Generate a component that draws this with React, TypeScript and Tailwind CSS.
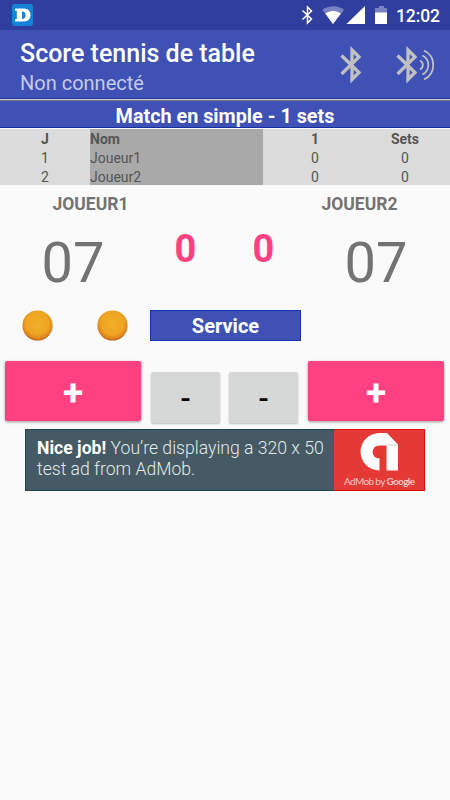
const rows = [
  { id: '1', name: 'Joueur1', set: '0', sets: '0' },
  { id: '2', name: 'Joueur2', set: '0', sets: '0' },
]

function StatusBar() {
  return (
    <div className="h-[30px] bg-[#303f9f] flex items-center text-white">
      <svg className="ml-3 w-[21px] h-[22px] shrink-0" viewBox="0 0 21 22">
        <rect width="21" height="22" rx="3" fill="#1683d8" />
        <path
          fill="#fff"
          fillRule="evenodd"
          d="M3 4.500h9c4 0 6.500 2.800 6.500 6.600S16 17.500 12 17.500H3v-2.300h1.800V6.800H3zM10 7.500v7.500c2.500 0 3.600-1.400 3.600-3.700S12.500 7.500 10 7.500z"
        />
      </svg>
      <svg className="ml-auto mr-[5px] w-[145px] h-[30px]" viewBox="300 0 145 30">
        <path
          d="M302.500 10.500l9 8.500-4 4V7l4 4-9 8.500"
          fill="none"
          stroke="#fff"
          strokeWidth="1.500"
        />
        <path d="M322.500 10C328 5 338.500 5 344 10L333 24z" fill="#7882c1" />
        <path d="M325.300 13.500C329.500 10 337 10 340.800 13.500L333 24z" fill="#fff" />
        <path d="M346.500 24L365 6v18z" fill="#fff" />
        <path d="M375 13V8h4V6h5v2h3v5z" fill="#7882c1" />
        <path d="M375 12.500h12V24h-12z" fill="#fff" />
        <text x="396" y="22" fontSize="17.500" fontWeight="500" fill="#fff" textLength="44">
          12:02
        </text>
      </svg>
    </div>
  )
}

function Bluetooth({ waves = false }: { waves?: boolean }) {
  return (
    <svg
      className={waves ? 'w-[40px] h-[40px]' : 'w-[22px] h-[40px]'}
      viewBox={waves ? '0 0 40 40' : '0 0 22 40'}
      fill="none"
      stroke="#c0c0c0"
    >
      <path d="M1.500 10.500l17.500 17-7 7V5l7 7-17.500 17" strokeWidth="3.300" />
      {waves && (
        <g strokeWidth="1.800">
          <path d="M24 15.500a5 5 0 0 1 0 9" />
          <path d="M26.300 10.500a10.500 10.500 0 0 1 0 19" />
          <path d="M28 5.500a16 16 0 0 1 0 29" />
        </g>
      )}
    </svg>
  )
}

function Ball() {
  return (
    <svg className="w-[31px] h-[31px]" viewBox="0 0 31 31">
      <defs>
        <radialGradient id="ball" cx="0.5" cy="0.42" r="0.58">
          <stop offset="0" stopColor="#f1ae29" />
          <stop offset="0.65" stopColor="#efa521" />
          <stop offset="0.88" stopColor="#dd861d" />
          <stop offset="1" stopColor="#b9581a" />
        </radialGradient>
      </defs>
      <circle cx="15.500" cy="15.500" r="15.100" fill="url(#ball)" />
      <path d="M10 17c2-1.500 3 1 5.500-.5s3 .5 5-.5" fill="none" stroke="#f3b43a" strokeWidth="1" />
    </svg>
  )
}

export default function App() {
  return (
    <div className="w-[450px] h-[800px] bg-[#fafafa] overflow-hidden font-['Roboto',sans-serif]">
      <StatusBar />

      {/* App bar */}
      <header className="h-[69px] bg-[#3f51b5] flex pl-5 border-b border-[#2437a0]">
        <div className="pt-[9px]">
          <h1 className="text-[25px] leading-[30px] font-medium text-white whitespace-nowrap">
            Score tennis de table
          </h1>
          <p className="text-[20px] leading-[29px] text-[#c5cbe9] whitespace-nowrap">Non connecté</p>
        </div>
        <div className="ml-auto pt-[15px] pr-[14px] flex gap-[34px]">
          <Bluetooth />
          <Bluetooth waves />
        </div>
      </header>
      <div className="h-[2px] bg-[#c9c9c6] border-b border-[#6c6f87]" />

      <div className="h-[27px] bg-[#3f51b5] border-b border-[#1230a0] text-center text-white text-[19.8px] leading-[32px] font-bold">
        Match en simple - 1 sets
      </div>

      {/* Score table */}
      <div className="mt-px h-[57px] pb-px bg-[#dcdcdc] bg-clip-content grid grid-cols-[90px_173px_97px_90px] text-center text-[14px] leading-[19px] text-[#555]">
        <div className="pt-px">
          <div className="font-bold">J</div>
          {rows.map(r => <div key={r.id}>{r.id}</div>)}
        </div>
        <div className="h-[56px] pt-px bg-[#a9a9a9] text-left">
          <div className="font-bold">Nom</div>
          {rows.map(r => <div key={r.id}>{r.name}</div>)}
        </div>
        <div className="pt-px pl-[7px]">
          <div className="font-bold">1</div>
          {rows.map(r => <div key={r.id}>{r.set}</div>)}
        </div>
        <div className="pt-px">
          <div className="font-bold">Sets</div>
          {rows.map(r => <div key={r.id}>{r.sets}</div>)}
        </div>
      </div>

      <div className="h-9 flex justify-between text-center text-[17.5px] leading-[37px] font-bold text-[#737373]">
        <div className="w-[181px]">JOUEUR1</div>
        <div className="w-[181px]">JOUEUR2</div>
      </div>

      {/* Points */}
      <div className="h-[88px] grid grid-cols-[146px_79px_77px_148px] text-center text-[#737373]">
        <div className="text-[56px] leading-[82px]">07</div>
        <div className="text-[38px] leading-[55px] font-bold text-[#ff4081]">0</div>
        <div className="text-[38px] leading-[55px] font-bold text-[#ff4081]">0</div>
        <div className="text-[56px] leading-[82px]">07</div>
      </div>

      <div className="h-[31px] flex">
        <div className="w-[150px] pl-[22px] flex gap-11">
          <Ball />
          <Ball />
        </div>
        <div className="w-[151px] h-[31px] bg-[#3f51b5] border border-[#1237b0] text-center text-white text-[20px] leading-[31px] font-bold">
          Service
        </div>
      </div>

      {/* Buttons */}
      <div className="h-[88px] pt-5 pl-[5px] flex items-start">
        <button className="w-[136px] h-[60px] rounded-[2px] bg-[#ff4081] shadow-[0_1px_3px_rgba(0,0,0,0.4)] text-white text-[37px] leading-[60px] font-bold pt-0.5">
          +
        </button>
        <button className="ml-[10px] mt-[11px] w-[69px] h-[51px] rounded-[2px] bg-[#d6d8d7] shadow-[0_1px_2px_rgba(0,0,0,0.25)] text-black text-[30px] leading-[50px] font-medium pt-0.5">
          -
        </button>
        <button className="ml-[9px] mt-[11px] w-[69px] h-[51px] rounded-[2px] bg-[#d6d8d7] shadow-[0_1px_2px_rgba(0,0,0,0.25)] text-black text-[30px] leading-[50px] font-medium pt-0.5">
          -
        </button>
        <button className="ml-[10px] w-[136px] h-[60px] rounded-[2px] bg-[#ff4081] shadow-[0_1px_3px_rgba(0,0,0,0.4)] text-white text-[37px] leading-[60px] font-bold pt-0.5">
          +
        </button>
      </div>

      {/* Ad banner */}
      <div className="mx-[25px] h-[62px] flex">
        <div className="w-[309px] bg-[#455a64] border border-r-0 border-[#1f4452] pl-[11px] pt-2 text-[17.6px] leading-[21px] font-light text-[#e3e8ea] whitespace-nowrap">
          <b className="font-bold text-white">Nice job!</b> You’re displaying a 320 x 50
          <br />
          test ad from AdMob.
        </div>
        <svg className="w-[91px] h-[62px]" viewBox="334 429 91 62">
          <path d="M334 429h91v62h-91z" fill="#e53935" />
          <path d="M334 429.500h90.500v61H334" fill="none" stroke="#e00808" />
          <path
            d="M379.500 433h7.500l11 11.500V470.500h-11.500V445.500h-7c-4 0-6.800 2.800-6.800 6.500s2.800 6.500 6.800 6.500v12c-10.500 0-19-8.300-19-18.700S369 433 379.500 433z"
            fill="#fff"
          />
          <path d="M386.500 445.500l.5-1H398v2z" fill="#ddd" />
          <text
            x="344"
            y="484.500"
            fontSize="10"
            fill="#f9c6c4"
            textLength="71"
            className="font-['Lato',sans-serif]"
          >
            AdMob by <tspan fontWeight="700">Google</tspan>
          </text>
        </svg>
      </div>
    </div>
  )
}
